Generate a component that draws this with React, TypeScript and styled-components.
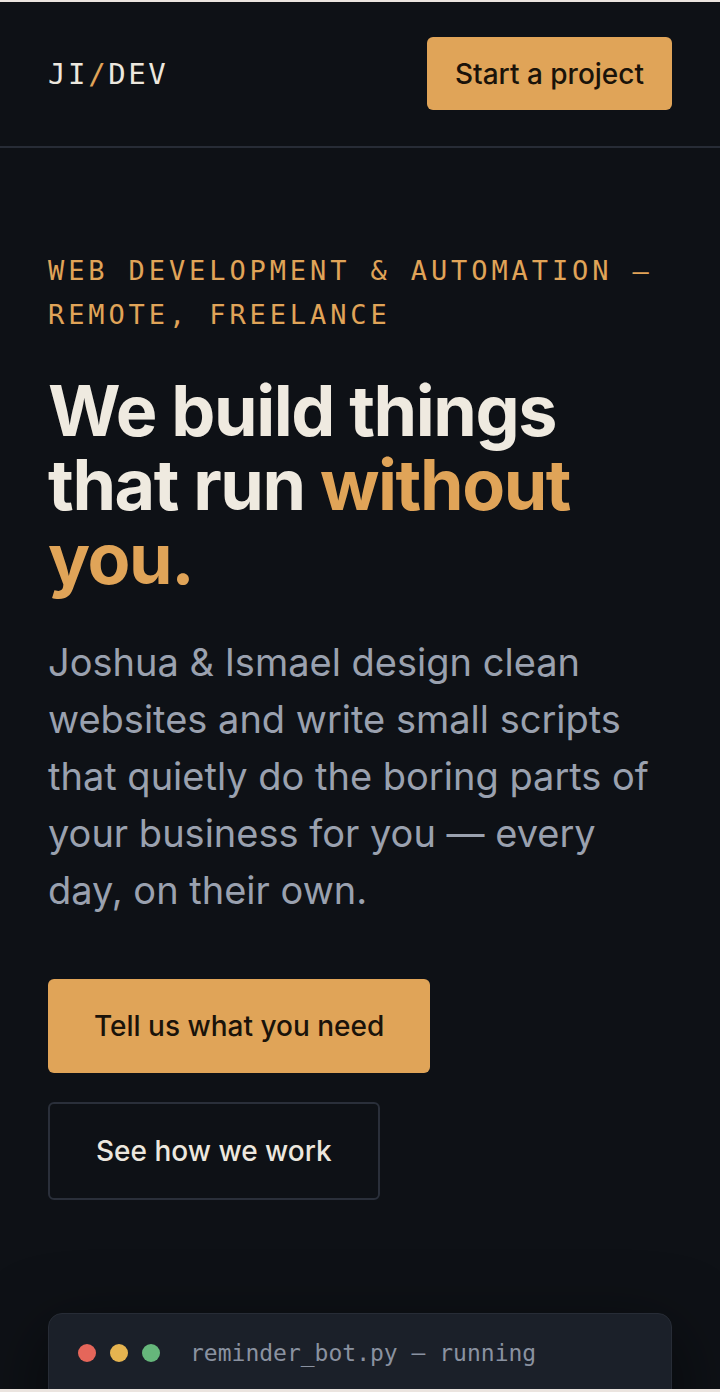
import React from "react";
import styled, { createGlobalStyle } from "styled-components";

const GlobalStyle = createGlobalStyle`
  html, body { margin: 0; padding: 0; }
  body {
    background: #0e1116;
    border-top: 2px solid #ebe4df;
    font-family: Inter, "Noto Sans", sans-serif;
    -webkit-font-smoothing: antialiased;
  }
  body::after {
    content: "";
    position: fixed;
    left: 0; right: 0; bottom: 0;
    height: 3px;
    background: #ebe4df;
  }
  * { box-sizing: border-box; }
`;

const accent = "#e0a458";
const mono = `"DejaVu Sans Mono", "Liberation Mono", monospace`;

const Page = styled.div`
  min-height: 1390px;
  background: #0e1116;
  overflow: hidden;
`;

const Header = styled.header`
  display: flex;
  align-items: center;
  justify-content: space-between;
  padding: 35px 48px 36px;
  border-bottom: 2px solid #272c36;
`;

const Logo = styled.div`
  font-family: ${mono};
  font-size: 29px;
  font-weight: 500;
  letter-spacing: 2.6px;
  color: #ece7de;
`;

const Slash = styled.span`
  color: ${accent};
`;

const Button = styled.a<{ $variant?: "primary" | "ghost"; $size?: "sm" | "lg" }>`
  display: inline-flex;
  align-items: center;
  justify-content: center;
  font-family: Inter, sans-serif;
  font-weight: 500;
  text-decoration: none;
  border-radius: 6px;
  cursor: pointer;
  font-size: 28px;
  height: ${(p) => (p.$size === "sm" ? "73px" : p.$variant === "ghost" ? "98px" : "94px")};
  padding: ${(p) => (p.$size === "sm" ? "0 28px" : "0 46px")};
  background: ${(p) => (p.$variant === "ghost" ? "transparent" : accent)};
  color: ${(p) => (p.$variant === "ghost" ? "#ece7de" : "#1a130a")};
  border: ${(p) => (p.$variant === "ghost" ? "2px solid #2a2f3a" : "none")};
`;

const Hero = styled.main`
  padding: 101px 48px 0;
  display: flex;
  flex-direction: column;
`;

const Eyebrow = styled.p`
  margin: 0;
  font-family: ${mono};
  font-size: 27px;
  line-height: 44px;
  letter-spacing: 3.9px;
  color: ${accent};
  text-transform: uppercase;
`;

const Title = styled.h1`
  margin: 37px 0 0;
  font-family: Inter, sans-serif;
  font-weight: 700;
  font-size: 70px;
  line-height: 74px;
  letter-spacing: -1.4px;
  color: #efeae0;
`;

const Highlight = styled.span`
  color: ${accent};
`;

const Lead = styled.p`
  margin: 38px 0 0;
  font-family: Inter, sans-serif;
  font-weight: 400;
  font-size: 38px;
  line-height: 57px;
  color: #9aa1af;
`;

const Actions = styled.div`
  display: flex;
  flex-wrap: wrap;
  gap: 29px 24px;
  margin-top: 60px;
`;

const Terminal = styled.section`
  margin-top: 113px;
  background: #1b2029;
  border: 1px solid #272c36;
  border-radius: 14px;
  box-shadow: 0 20px 70px rgba(0, 0, 0, 0.55);
  padding: 26px 29px 60px;
`;

const TerminalBar = styled.div`
  display: flex;
  align-items: center;
  gap: 14px;
`;

const Dot = styled.span<{ $color: string }>`
  width: 18px;
  height: 18px;
  border-radius: 50%;
  background: ${(p) => p.$color};
`;

const TerminalTitle = styled.span`
  margin-left: 16px;
  font-family: ${mono};
  font-size: 23px;
  color: #8a92a0;
`;

export default function App() {
  return (
    <Page>
      <GlobalStyle />
      <Header>
        <Logo>
          JI<Slash>/</Slash>DEV
        </Logo>
        <Button $size="sm">Start a project</Button>
      </Header>
      <Hero>
        <Eyebrow>Web development &amp; automation — remote, freelance</Eyebrow>
        <Title>
          We build things that run <Highlight>without you.</Highlight>
        </Title>
        <Lead>
          Joshua &amp; Ismael design clean websites and write small scripts that quietly do the
          boring parts of your business for you — every day, on their own.
        </Lead>
        <Actions>
          <Button>Tell us what you need</Button>
          <Button $variant="ghost">See how we work</Button>
        </Actions>
        <Terminal>
          <TerminalBar>
            <Dot $color="#e5665a" />
            <Dot $color="#e6b450" />
            <Dot $color="#66b77b" />
            <TerminalTitle>reminder_bot.py — running</TerminalTitle>
          </TerminalBar>
        </Terminal>
      </Hero>
    </Page>
  );
}
